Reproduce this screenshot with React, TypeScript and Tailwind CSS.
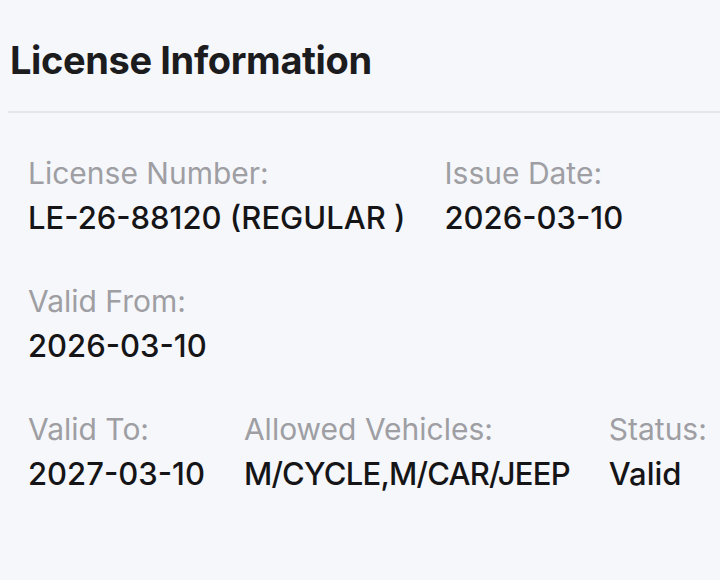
import React from "react";

type Field = { label: string; value: string; tight?: boolean };

const rows: Field[][] = [
  [
    { label: "License Number:", value: "LE-26-88120 (REGULAR )" },
    { label: "Issue Date:", value: "2026-03-10" },
  ],
  [{ label: "Valid From:", value: "2026-03-10" }],
  [
    { label: "Valid To:", value: "2027-03-10" },
    { label: "Allowed Vehicles:", value: "M/CYCLE,M/CAR/JEEP", tight: true },
    { label: "Status:", value: "Valid" },
  ],
];

export default function App() {
  return (
    <div
      className="w-[720px] h-[580px] overflow-hidden bg-[#f5f7fb] text-[#1c1c1e]"
      style={{ fontFamily: "Inter, 'Noto Sans', sans-serif" }}
    >
      {/* Header */}
      <div className="pl-[10px] pt-[38px] pb-[29px]">
        <h1 className="text-[38px] leading-[44px] font-bold tracking-[-0.01em]">
          License Information
        </h1>
      </div>
      <div className="ml-[8px] h-[2px] bg-[#e4e6eb]" />

      {/* Details */}
      <div className="flex flex-col gap-[51px] pl-[28px] pt-[44px]">
        {rows.map((row, i) => (
          <div key={i} className="flex gap-[39px]">
            {row.map((f) => (
              <div
                key={f.label}
                className="flex flex-col gap-[13px] shrink-0 whitespace-nowrap"
              >
                <span className="text-[30px] leading-[32px] text-[#9e9ea3]">
                  {f.label}
                </span>
                <span
                  className={
                    f.tight
                      ? "text-[31px] leading-[32px] font-medium text-[#151517] tracking-[-0.025em]"
                      : "text-[31px] leading-[32px] font-medium text-[#151517]"
                  }
                >
                  {f.value}
                </span>
              </div>
            ))}
          </div>
        ))}
      </div>
    </div>
  );
}
